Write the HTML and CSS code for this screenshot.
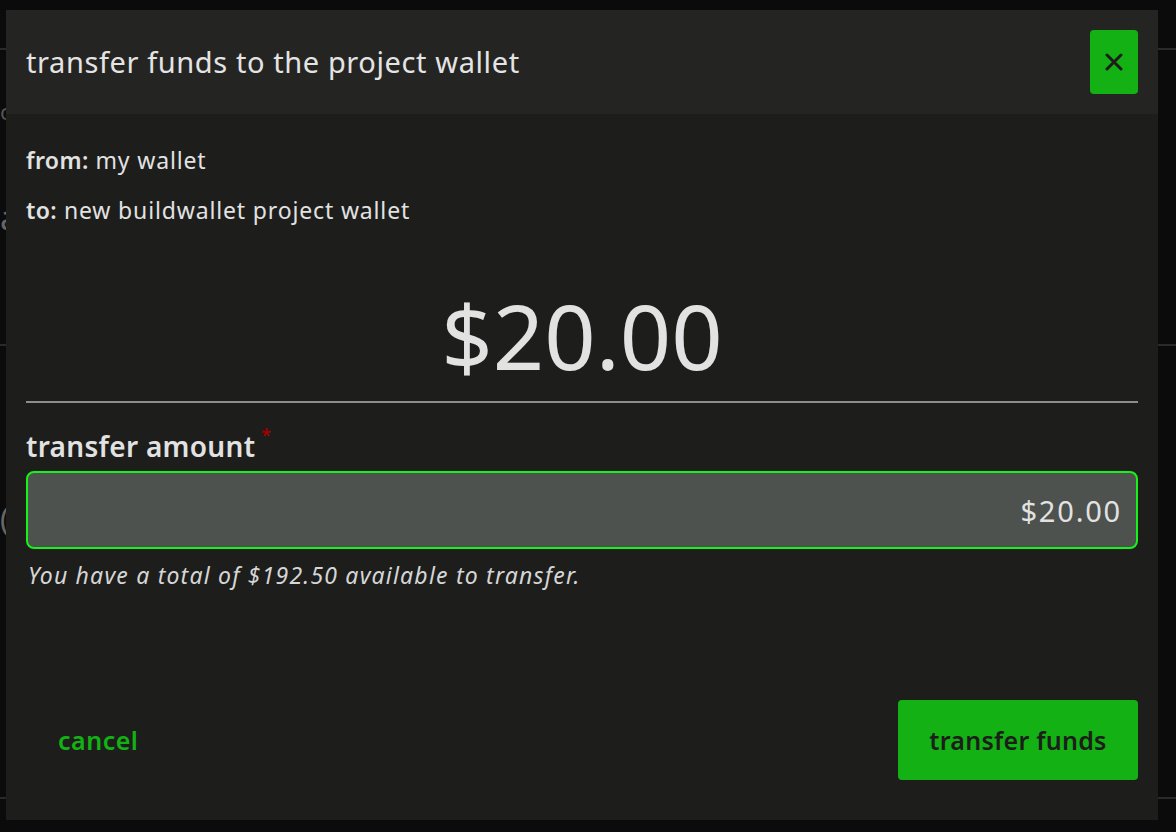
FILE: index.html
```html
<!DOCTYPE html>
<html lang="en">
<head>
<meta charset="utf-8">
<title>transfer funds</title>
<link rel="stylesheet" href="styles.css">
</head>
<body>
<div class="page">
  <div class="page-top"></div>
  <div class="page-frag frag-o">o</div>
  <div class="page-frag frag-a">a</div>
  <div class="page-rule rule-1"></div>
  <div class="page-frag frag-p">(</div>
  <div class="page-rule rule-2"></div>
</div>

<div class="modal" role="dialog" aria-labelledby="modal-title">
  <div class="modal-header">
    <h2 class="modal-title" id="modal-title">transfer funds to the project wallet</h2>
    <button class="close-btn" aria-label="close">
      <svg width="18" height="18" viewBox="0 0 18 18"><path d="M2 2 L16 16 M16 2 L2 16" stroke="#1d1e1c" stroke-width="3" stroke-linecap="round"/></svg>
    </button>
  </div>
  <div class="modal-body">
    <p class="info"><b>from:</b> my wallet</p>
    <p class="info info-to"><b>to:</b> new buildwallet project wallet</p>
    <div class="amount">$20.00</div>
    <label class="field-label" for="amt">transfer amount<span class="req">*</span></label>
    <div class="field">$20.00</div>
    <p class="help">You have a total of $192.50 available to transfer.</p>
  </div>
  <div class="modal-footer">
    <button class="btn-cancel">cancel</button>
    <button class="btn-primary">transfer funds</button>
  </div>
</div>
</body>
</html>
```

FILE: styles.css
```css
* { box-sizing: border-box; }
html, body { margin: 0; padding: 0; }
body {
  background: #0b0b0b;
  font-family: "Noto Sans", "Open Sans", sans-serif;
  color: #e2e2e2;
  width: 1176px;
  height: 832px;
  overflow: hidden;
}

.page { display: flex; flex-direction: column; }
.page-top { height: 50px; border-bottom: 2px solid #2a2a2a; }
.page-frag { color: #555; font-size: 22px; line-height: 30px; }
.frag-o { margin-top: 46px; }
.frag-a { margin-top: 71px; font-size: 34px; line-height: 40px; color: #666; }
.page-rule { height: 2px; background: #2a2a2a; }
.rule-1 { margin-top: 107px; }
.frag-p { margin-top: 158px; font-size: 30px; color: #666; }
.rule-2 { margin-top: 263px; }

.modal {
  position: fixed;
  left: 6px;
  top: 10px;
  width: 1152px;
  height: 810px;
  background: #1d1e1c;
  display: flex;
  flex-direction: column;
}
.modal-header {
  height: 104px;
  background: #242523;
  display: flex;
  align-items: center;
  justify-content: space-between;
  padding: 0 20px;
}
.modal-title {
  margin: 0;
  font-size: 29px;
  font-weight: 400;
  color: #e4e4e4;
  letter-spacing: 0.6px;
  position: relative;
  top: -1px;
}
.close-btn {
  width: 48px;
  height: 64px;
  border: none;
  border-radius: 4px;
  background: #13b113;
  display: flex;
  align-items: center;
  justify-content: center;
  padding: 0;
}
.modal-body {
  padding: 31px 20px 0;
  display: flex;
  flex-direction: column;
}
.info { margin: 0; font-size: 23px; line-height: 30px; color: #e2e2e2; letter-spacing: 0.85px; }
.info b { font-weight: 600; letter-spacing: 0.4px; }
.info-to { margin-top: 20px; }
.amount {
  margin-top: 60px;
  text-align: center;
  font-size: 90px;
  line-height: 100px;
  font-weight: 400;
  color: #e2e2e2;
  padding-bottom: 16px;
  border-bottom: 2px solid #8d8d8d;
}
.field-label {
  margin-top: 26px;
  font-size: 28px;
  line-height: 34px;
  font-weight: 600;
  letter-spacing: 0.3px;
  color: #e2e2e2;
}
.req { color: #a30000; font-size: 18px; vertical-align: top; margin-left: 6px; position: relative; top: -11px; }
.field {
  margin-top: 8px;
  height: 78px;
  border: 2px solid #17f317;
  border-radius: 8px;
  background: #4d524e;
  display: flex;
  align-items: center;
  justify-content: flex-end;
  padding: 0 14px;
  font-size: 29px;
  letter-spacing: 1.8px;
  color: #e2e2e2;
}
.help {
  margin: 11px 0 0 2px;
  font-size: 23px;
  line-height: 30px;
  font-style: italic;
  letter-spacing: 1.2px;
  color: #d6d6d6;
}
.modal-footer {
  margin-top: auto;
  padding: 0 20px 40px;
  display: flex;
  justify-content: space-between;
  align-items: center;
}
.btn-cancel {
  height: 80px;
  padding: 0 32px;
  background: transparent;
  border: none;
  color: #13b113;
  font-family: inherit;
  font-size: 25px;
  font-weight: 600;
  letter-spacing: 0.5px;
}
.btn-primary {
  width: 240px;
  height: 80px;
  border: none;
  border-radius: 4px;
  background: #13b113;
  color: #1d1e1c;
  font-family: inherit;
  font-size: 25px;
  font-weight: 600;
  letter-spacing: 0.25px;
}
```
